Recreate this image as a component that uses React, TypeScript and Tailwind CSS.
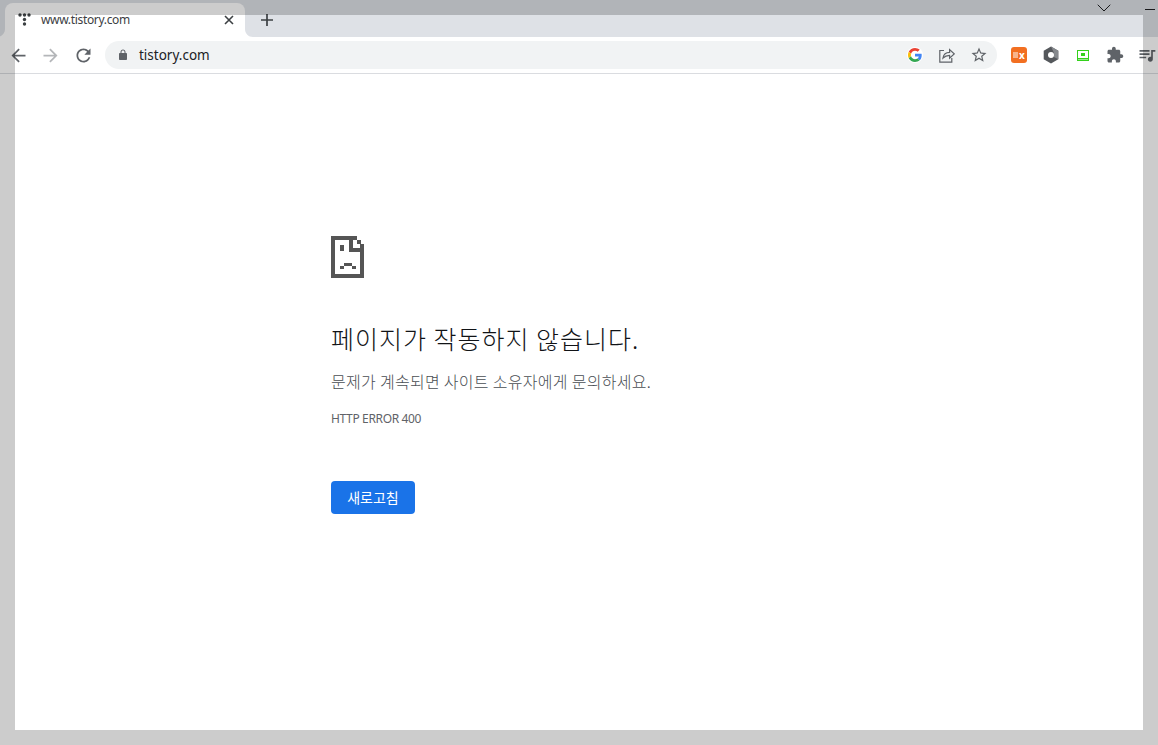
import React from "react";
import { ChevronDown } from "lucide-react";

const uiFont = "font-['Noto_Sans','Noto_Sans_CJK_KR',sans-serif]";
const krFont = "font-['Noto_Sans_CJK_KR','Noto_Sans',sans-serif]";

const Icon = ({ d, size = 20, className = "" }: { d: string; size?: number; className?: string }) => (
  <svg width={size} height={size} viewBox="0 0 24 24" className={className} fill="currentColor">
    <path d={d} />
  </svg>
);

const paths = {
  back: "M20 11H7.83l5.59-5.59L12 4l-8 8 8 8 1.41-1.41L7.83 13H20v-2z",
  forward: "M12 4l-1.41 1.41L16.17 11H4v2h12.17l-5.58 5.59L12 20l8-8z",
  reload:
    "M17.65 6.35C16.2 4.9 14.21 4 12 4c-4.42 0-7.99 3.58-7.99 8s3.57 8 7.99 8c3.73 0 6.84-2.55 7.73-6h-2.08c-.82 2.33-3.04 4-5.65 4-3.31 0-6-2.69-6-6s2.69-6 6-6c1.66 0 3.14.69 4.22 1.78L13 11h7V4l-2.35 2.35z",
  lock: "M18 8h-1V6c0-2.76-2.24-5-5-5S7 3.24 7 6v2H6c-1.1 0-2 .9-2 2v10c0 1.1.9 2 2 2h12c1.1 0 2-.9 2-2V10c0-1.1-.9-2-2-2zM9 6c0-1.66 1.34-3 3-3s3 1.34 3 3v2H9V6z",
  star: "M22 9.24l-7.19-.62L12 2 9.19 8.63 2 9.24l5.46 4.73L5.82 21 12 17.27 18.18 21l-1.63-7.03L22 9.24zM12 15.4l-3.76 2.27 1-4.28-3.32-2.88 4.38-.38L12 6.1l1.71 4.04 4.38.38-3.32 2.88 1 4.28L12 15.4z",
  puzzle:
    "M20.5 11H19V7c0-1.1-.9-2-2-2h-4V3.5C13 2.12 11.88 1 10.5 1S8 2.12 8 3.5V5H4c-1.1 0-1.99.9-1.99 2v3.8H3.5c1.49 0 2.7 1.21 2.7 2.7s-1.21 2.7-2.7 2.7H2V20c0 1.1.9 2 2 2h3.8v-1.5c0-1.49 1.21-2.7 2.7-2.7 1.49 0 2.7 1.21 2.7 2.7V22H17c1.1 0 2-.9 2-2v-4h1.5c1.38 0 2.5-1.12 2.5-2.5S21.88 11 20.5 11z",
  queue:
    "M15 6H3v2h12V6zm0 4H3v2h12v-2zM3 16h8v-2H3v2zM17 6v8.18c-.31-.11-.65-.18-1-.18-1.66 0-3 1.34-3 3s1.34 3 3 3 3-1.34 3-3V8h3V6h-5z",
};

const Favicon = () => (
  <svg width="14" height="13" viewBox="0 0 14 13" fill="#3c4043">
    <circle cx="2" cy="2" r="1.7" />
    <circle cx="6.5" cy="2" r="1.7" />
    <circle cx="11" cy="2" r="1.7" />
    <circle cx="6.5" cy="6.5" r="1.7" />
    <circle cx="6.5" cy="11" r="1.7" />
  </svg>
);

const GoogleG = () => (
  <svg width="14" height="14" viewBox="0 0 48 48">
    <path fill="#EA4335" d="M24 9.5c3.54 0 6.71 1.22 9.21 3.6l6.85-6.85C35.9 2.38 30.47 0 24 0 14.62 0 6.51 5.38 2.56 13.22l7.98 6.19C12.43 13.72 17.74 9.5 24 9.5z" />
    <path fill="#4285F4" d="M46.98 24.55c0-1.57-.15-3.09-.38-4.55H24v9.02h12.94c-.58 2.96-2.26 5.48-4.78 7.18l7.73 6c4.51-4.18 7.09-10.36 7.09-17.65z" />
    <path fill="#FBBC05" d="M10.53 28.59c-.48-1.45-.76-2.99-.76-4.59s.27-3.14.76-4.59l-7.98-6.19C.92 16.46 0 20.12 0 24c0 3.88.92 7.54 2.56 10.78l7.97-6.19z" />
    <path fill="#34A853" d="M24 48c6.48 0 11.93-2.13 15.89-5.81l-7.73-6c-2.15 1.45-4.92 2.3-8.16 2.3-6.26 0-11.57-4.22-13.47-9.91l-7.98 6.19C6.51 42.62 14.62 48 24 48z" />
  </svg>
);

const ShareIcon = () => (
  <svg width="16" height="16" viewBox="0 0 16 16" fill="none" stroke="#5f6368" strokeWidth="1.2">
    <path d="M5 3.500H.8v11.700h12V11" />
    <path d="M4 11c.6-3.600 3.200-5.600 6.600-5.600V2.600l4.600 4.300-4.600 4.200V8.300C8 8.300 5.800 9.100 4 11z" />
  </svg>
);

const HexIcon = () => (
  <svg width="16" height="18" viewBox="0 0 16 18">
    <path d="M8 .5l7.300 4.200v8.600L8 17.500.7 13.300V4.700z" fill="#55585c" />
    <path d="M8 .5l7.300 4.200v8.600L11 11V7z" fill="#85888c" />
    <circle cx="8" cy="9" r="3" fill="#fff" />
  </svg>
);

const ScreenIcon = () => (
  <svg width="12" height="11" viewBox="0 0 12 11" fill="none">
    <rect x=".5" y=".5" width="11" height="10" fill="#fff" stroke="#34d11c" />
    <rect x="4" y="3" width="4" height="3" fill="#34d11c" />
    <rect x="1" y="8" width="10" height="1.5" fill="#34d11c" />
  </svg>
);

const SadFile = () => (
  <svg width="33" height="42" viewBox="0 0 33 42" fill="#555555" shapeRendering="crispEdges">
    <rect x="0" y="0" width="4" height="42" />
    <rect x="0" y="0" width="26" height="4" />
    <rect x="0" y="38" width="33" height="4" />
    <rect x="29" y="8" width="4" height="34" />
    <rect x="26" y="4" width="4" height="4" />
    <rect x="18" y="4" width="4" height="12" />
    <rect x="18" y="12" width="15" height="4" />
    <rect x="9" y="9" width="4" height="6" />
    <rect x="13" y="27" width="8" height="3" />
    <rect x="9" y="30" width="4" height="3" />
    <rect x="21" y="30" width="4" height="3" />
  </svg>
);

const Toolbar = () => (
  <div className="flex h-9 items-center border-0 bg-white pl-[2px]">
    <div className="flex h-8 w-[32.5px] shrink-0 items-center justify-center text-[#5f6368]">
      <Icon d={paths.back} size={21} />
    </div>
    <div className="flex h-8 w-[32.5px] shrink-0 items-center justify-center text-[#b4b6b9]">
      <Icon d={paths.forward} size={21} />
    </div>
    <div className="flex h-8 w-[32px] shrink-0 items-center justify-center text-[#5f6368]">
      <Icon d={paths.reload} size={21} />
    </div>
    <div className="ml-[6px] flex h-7 w-[892px] shrink-0 items-center rounded-full bg-[#f1f3f4] pl-[12px] pr-[2px]">
      <Icon d={paths.lock} size={12} className="text-[#5f6368]" />
      <span className={`ml-[10px] flex-1 text-[13.5px] text-[#202124] ${uiFont}`}>tistory.com</span>
      <div className="flex w-[32px] justify-center">
        <div className="flex h-4 w-4 items-center justify-center rounded-full bg-white">
          <GoogleG />
        </div>
      </div>
      <div className="flex w-[32px] justify-center">
        <ShareIcon />
      </div>
      <div className="flex w-[32px] justify-center text-[#5f6368]">
        <Icon d={paths.star} size={18} />
      </div>
    </div>
    <div className="ml-[6px] flex w-8 shrink-0 justify-center">
      <div className={`flex h-4 w-4 items-center justify-center gap-px rounded-[3px] bg-[#f26f21] ${uiFont}`}>
        <span className="h-[6px] w-[5px] bg-[#f7b48c]" />
        <span className="text-[10px] font-bold leading-none text-white">x</span>
      </div>
    </div>
    <div className="flex w-8 shrink-0 justify-center">
      <HexIcon />
    </div>
    <div className="flex w-8 shrink-0 justify-center">
      <ScreenIcon />
    </div>
    <div className="flex w-8 shrink-0 justify-center text-[#5f6368]">
      <Icon d={paths.puzzle} size={18} />
    </div>
    <div className="flex w-8 shrink-0 justify-center text-[#5f6368]">
      <Icon d={paths.queue} size={20} />
    </div>
  </div>
);

const TabStrip = () => (
  <div className="flex h-[37px] items-end bg-[#dee1e6] pl-[5px]">
    <div className="relative flex h-[34px] w-[240px] shrink-0 items-center rounded-t-lg bg-white pb-px pl-[13px] pr-[11px]">
      <svg width="8" height="8" viewBox="0 0 8 8" className="absolute bottom-0 left-[-8px]" fill="#fff">
        <path d="M8 0v8H0c4.500 0 8-3.500 8-8z" />
      </svg>
      <svg width="8" height="8" viewBox="0 0 8 8" className="absolute bottom-0 right-[-8px]" fill="#fff">
        <path d="M0 0v8h8C3.500 8 0 4.500 0 0z" />
      </svg>
      <Favicon />
      <span className={`ml-[9px] flex-1 text-xs tracking-[-0.33px] text-[#3c4043] ${uiFont}`}>www.tistory.com</span>
      <svg width="10" height="10" viewBox="0 0 10 10" stroke="#3c4043" strokeWidth="1.6">
        <path d="M1 1l8 8M9 1l-8 8" />
      </svg>
    </div>
    <div className="ml-[16px] flex h-[34px] items-center pb-px">
      <svg width="12" height="12" viewBox="0 0 12 12" stroke="#3c4043" strokeWidth="1.7">
        <path d="M6 0v12M0 6h12" />
      </svg>
    </div>
  </div>
);

const ErrorPage = () => (
  <main className="flex-1 border-t border-[#dadce0] bg-white pl-[331px] pt-[162px]">
    <SadFile />
    <h1 className={`mt-[42px] text-[25px] font-light tracking-[1px] leading-[36px] text-[#111316] ${krFont}`}>
      페이지가 작동하지 않습니다.
    </h1>
    <p className={`mt-[14px] text-[16px] font-light tracking-[0.3px] leading-[22px] text-[#4a4e53] ${krFont}`}>
      문제가 계속되면 사이트 소유자에게 문의하세요.
    </p>
    <p className={`mt-[19px] text-xs tracking-[-0.35px] leading-4 text-[#5f6368] ${uiFont}`}>HTTP ERROR 400</p>
    <button className={`mt-[54px] h-[33px] w-[84px] rounded-[4px] bg-[#1a73e8] pb-px text-[14px] font-normal text-white ${krFont}`}>
      새로고침
    </button>
  </main>
);

export default function App() {
  return (
    <div className="relative flex h-screen w-screen flex-col overflow-hidden bg-white">
      <TabStrip />
      <Toolbar />
      <ErrorPage />
      {/* window chrome sitting above the tab strip */}
      <ChevronDown size={24} strokeWidth={1} className="absolute left-[1092px] top-[-4px] text-[#202124]" />
      <div className="absolute left-[1145px] top-[9px] h-px w-[10px] bg-[#202124]" />
      {/* translucent frame over the whole shot */}
      <div className="pointer-events-none absolute inset-0 border-[15px] border-black/20" />
    </div>
  );
}
